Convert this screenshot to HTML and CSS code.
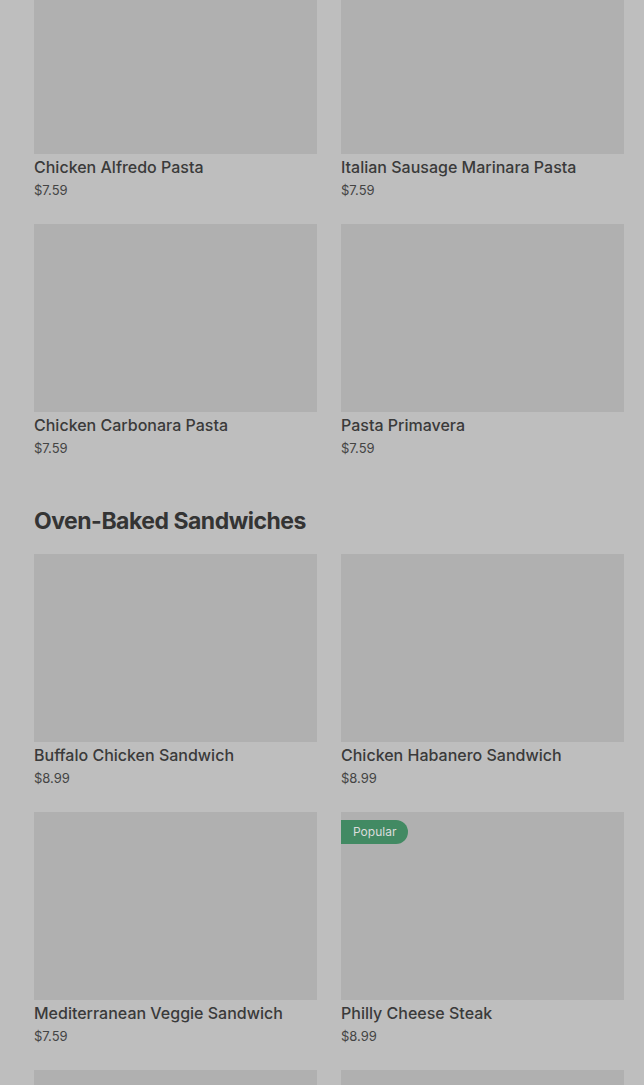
FILE: index.html
```html
<!DOCTYPE html>
<html lang="en">
<head>
    <meta charset="UTF-8">
    <title>Menu</title>
    <link rel="stylesheet" href="styles.css">
</head>
<body>

<div class="menu">
    <section class="category first">
        <div class="grid">
            <div class="item">
                <div class="photo"></div>
                <h3>Chicken Alfredo Pasta</h3>
                <p class="price">$7.59</p>
            </div>
            <div class="item">
                <div class="photo"></div>
                <h3>Italian Sausage Marinara Pasta</h3>
                <p class="price">$7.59</p>
            </div>
            <div class="item">
                <div class="photo"></div>
                <h3>Chicken Carbonara Pasta</h3>
                <p class="price">$7.59</p>
            </div>
            <div class="item">
                <div class="photo"></div>
                <h3>Pasta Primavera</h3>
                <p class="price">$7.59</p>
            </div>
        </div>
    </section>

    <section class="category">
        <h2>Oven-Baked Sandwiches</h2>
        <div class="grid">
            <div class="item">
                <div class="photo"></div>
                <h3>Buffalo Chicken Sandwich</h3>
                <p class="price">$8.99</p>
            </div>
            <div class="item">
                <div class="photo"></div>
                <h3>Chicken Habanero Sandwich</h3>
                <p class="price">$8.99</p>
            </div>
            <div class="item">
                <div class="photo"></div>
                <h3>Mediterranean Veggie Sandwich</h3>
                <p class="price">$7.59</p>
            </div>
            <div class="item">
                <div class="photo"><span class="badge">Popular</span></div>
                <h3>Philly Cheese Steak</h3>
                <p class="price">$8.99</p>
            </div>
            <div class="item">
                <div class="photo"></div>
            </div>
            <div class="item">
                <div class="photo"></div>
            </div>
        </div>
    </section>
</div>

</body>
</html>
```

FILE: styles.css
```css
body {
    margin: 0;
    background: #bebebe;
    font-family: Inter, "Noto Sans", sans-serif;
    color: #363636;
    overflow: hidden;
}

.menu {
    padding: 0 20px 0 34px;
    margin-top: -34px;
}

.category h2 {
    margin: 47px 0 17px;
    font-size: 23px;
    line-height: 32px;
    font-weight: 700;
    letter-spacing: -0.5px;
    color: #343434;
}

.grid {
    display: grid;
    grid-template-columns: 283px 283px;
    column-gap: 24px;
    row-gap: 24px;
}

.item .photo {
    position: relative;
    height: 188px;
    background: #b0b0b0;
}

.badge {
    position: absolute;
    top: 8px;
    left: 0;
    height: 24px;
    line-height: 24px;
    padding: 0 12px;
    border-radius: 0 12px 12px 0;
    background: #428a63;
    color: #dcdcdc;
    font-size: 12px;
}

.item h3 {
    margin: 1px 0 0;
    font-size: 16px;
    line-height: 24px;
    font-weight: 500;
    color: #3a3a3a;
}

.item .price {
    margin: 1px 0 0;
    font-size: 13px;
    line-height: 20px;
    color: #444;
}
```
